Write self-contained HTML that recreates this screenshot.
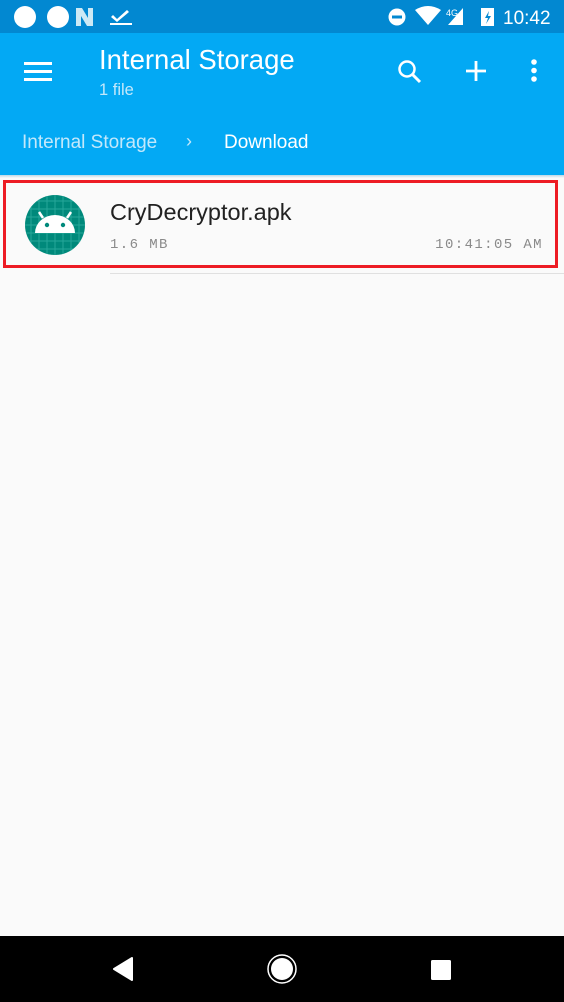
<!DOCTYPE html>
<html><head><meta charset="utf-8"><style>
*{margin:0;padding:0;box-sizing:border-box}
body{width:564px;height:1002px;background:#fafafa;font-family:"Liberation Sans",sans-serif;position:relative;overflow:hidden}
.abs{position:absolute}
.mono{font-family:'Liberation Mono',monospace;font-size:14px;color:#8a8a8a;letter-spacing:1.4px}
</style></head><body>
<div class="abs" style="left:0;top:0;width:564px;height:33px;background:#0288d1"></div>
<div class="abs" style="left:0;top:33px;width:564px;height:142px;background:#03a9f4"></div>
<div class="abs" style="left:0;top:175px;width:564px;height:3px;background:linear-gradient(#bcd7e6,#fafafa)"></div>
<svg class="abs" style="left:0;top:0" width="564" height="33">
<circle cx="25" cy="17" r="11" fill="#fff"/><circle cx="58" cy="17" r="11" fill="#fff"/>
<path d="M76 8h6l6 10V8h5v18h-6l-6-10v10h-5z" fill="#cde9f5"/>
<path d="M110 23h22v2h-22z M113 15l4 4 10-9 2 2-12 10-6-5z" fill="#fff"/>
<circle cx="397" cy="17" r="8.5" fill="#fff"/><rect x="392" y="15.5" width="10" height="3" fill="#0288d1"/>
<path d="M415 10q13-8 26 0l-13 15z" fill="#fff"/>
<text x="446" y="16" font-size="9" fill="#fff" font-family="Liberation Sans">4G</text>
<path d="M448 25l15-17v17z" fill="#fff"/>
<rect x="481" y="8" width="13" height="18" fill="#fff"/><path d="M489 11l-4 7h3l-2 6 5-8h-3z" fill="#0288d1"/>
<text x="503" y="24" font-size="19" fill="#fff" font-family="Liberation Sans">10:42</text>
</svg>
<svg class="abs" style="left:0;top:33px" width="564" height="80">
<rect x="24" y="29" width="28" height="3" fill="#fff"/><rect x="24" y="37" width="28" height="3" fill="#fff"/><rect x="24" y="45" width="28" height="3" fill="#fff"/>
<circle cx="407" cy="36" r="7.5" fill="none" stroke="#fff" stroke-width="2.5"/><path d="M412 41l8 8" stroke="#fff" stroke-width="3"/>
<path d="M466 38h20M476 28v20" stroke="#fff" stroke-width="2.8"/>
<circle cx="534" cy="29" r="2.8" fill="#fff"/><circle cx="534" cy="37.5" r="2.8" fill="#fff"/><circle cx="534" cy="46" r="2.8" fill="#fff"/>
</svg>
<div class="abs" style="left:99px;top:44px;font-size:27.5px;color:#fff">Internal Storage</div>
<div class="abs" style="left:99px;top:81px;font-size:16.5px;color:#c3e8fb">1 file</div>
<div class="abs" style="left:22px;top:132px;font-size:19px;color:#c3e8fb">Internal Storage</div>
<div class="abs" style="left:186px;top:131px;font-size:18px;color:#c3e8fb">›</div>
<div class="abs" style="left:224px;top:132px;font-size:19px;color:#fff">Download</div>
<svg class="abs" style="left:24px;top:194px" width="62" height="62">
<defs><clipPath id="c"><circle cx="31" cy="31" r="30"/></clipPath></defs>
<circle cx="31" cy="31" r="30" fill="#00897b"/>
<g clip-path="url(#c)" stroke="#26a69a" stroke-width="1">
<path d="M7 0v62M15 0v62M23 0v62M31 0v62M39 0v62M47 0v62M55 0v62M0 7h62M0 15h62M0 23h62M0 31h62M0 39h62M0 47h62M0 55h62"/></g>
<path d="M11 39a20 18 0 0 1 40 0z" fill="#fff"/>
<path d="M19 24l-4-6M43 24l4-6" stroke="#fff" stroke-width="2.5"/>
<circle cx="23" cy="31" r="2.2" fill="#00897b"/><circle cx="39" cy="31" r="2.2" fill="#00897b"/>
</svg>
<div class="abs" style="left:110px;top:199px;font-size:23.5px;color:#212121">CryDecryptor.apk</div>
<div class="abs mono" style="left:110px;top:237px">1.6 MB</div>
<div class="abs mono" style="right:21px;top:237px">10:41:05 AM</div>
<div class="abs" style="left:110px;top:273px;width:454px;height:1px;background:#e0e0e0"></div>
<div class="abs" style="left:3px;top:180px;width:555px;height:88px;border:3px solid #ed1c24"></div>
<div class="abs" style="left:0;top:936px;width:564px;height:66px;background:#000"></div>
<svg class="abs" style="left:0;top:936px" width="564" height="66">
<path d="M114 33l18-11v22z" fill="#fff" stroke="#fff" stroke-width="2" stroke-linejoin="round"/>
<circle cx="282" cy="33" r="14" fill="none" stroke="#fff" stroke-width="1.5"/><circle cx="282" cy="33" r="11" fill="#fff"/>
<rect x="431" y="24" width="20" height="20" rx="1.5" fill="#fff"/>
</svg>
</body></html>
